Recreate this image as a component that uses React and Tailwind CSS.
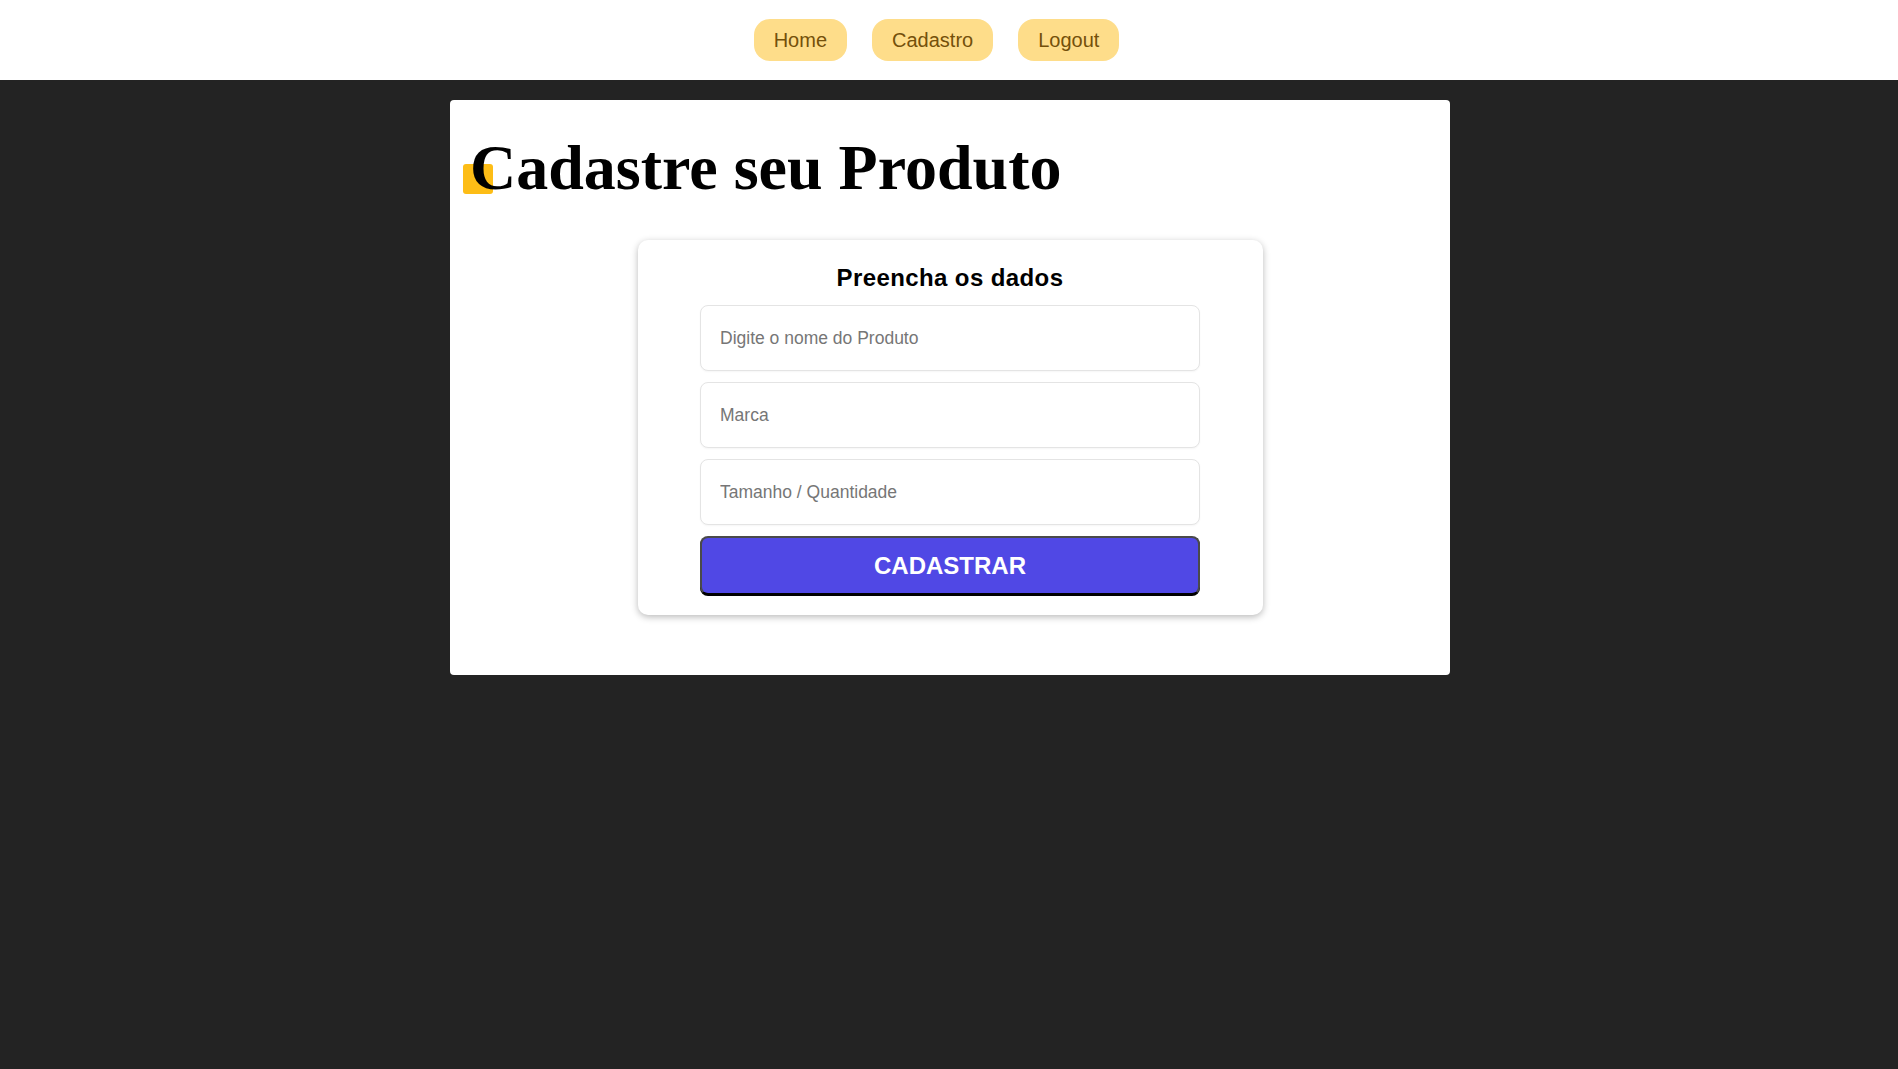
import React from "react";

function NavButton({ children }) {
  return (
    <a
      href="#"
      className="flex h-[42px] items-center rounded-[16px] bg-[#fedd8a] px-5 text-[20px] leading-none text-[#74500a] no-underline"
    >
      {children}
    </a>
  );
}

function Field({ placeholder }) {
  return (
    <input
      type="text"
      placeholder={placeholder}
      className="h-[66px] w-full rounded-[8px] border border-[#e4e4e4] bg-white px-[19px] text-[17.5px] text-[#333] shadow-[0_1px_2px_rgba(0,0,0,0.04)] outline-none placeholder:text-[#767676]"
      style={{ fontFamily: '"Liberation Sans", Arial, sans-serif' }}
    />
  );
}

export default function App() {
  return (
    <div
      className="min-h-[1069px] bg-[#232323]"
      style={{ fontFamily: '"Liberation Sans", Arial, sans-serif' }}
    >
      <nav className="flex h-[80px] items-center justify-center gap-[25px] bg-white pr-[25px]">
        <NavButton>Home</NavButton>
        <NavButton>Cadastro</NavButton>
        <NavButton>Logout</NavButton>
      </nav>

      <main className="flex justify-center pt-[20px] pl-[2px]">
        <section className="w-[1000px] rounded-[4px] bg-white px-[20px] pt-[32px] pb-[60px]">
          <h1
            className="relative m-0 text-[64px] font-bold leading-[72px] text-black"
            style={{ fontFamily: '"Liberation Serif", "Times New Roman", serif' }}
          >
            <span className="absolute left-[-7px] top-[32px] h-[30px] w-[30px] rounded-[3px] bg-[#fdbd16]" />
            <span className="relative">Cadastre seu Produto</span>
          </h1>

          <div className="mt-[36px] flex justify-center">
            <form
              className="flex w-[625px] flex-col items-center rounded-[10px] bg-white pt-[24px] pb-[20px] shadow-[0_2px_7px_rgba(0,0,0,0.28)]"
              onSubmit={(e) => e.preventDefault()}
            >
              <h2 className="m-0 text-[24px] font-bold leading-[27px] tracking-[0.4px] text-black">
                Preencha os dados
              </h2>
              <div className="mt-[14px] flex w-[500px] flex-col gap-[11px]">
                <Field placeholder="Digite o nome do Produto" />
                <Field placeholder="Marca" />
                <Field placeholder="Tamanho / Quantidade" />
                <button
                  type="submit"
                  className="h-[59px] w-full rounded-[8px] border-2 border-[#4a4a4a] border-b-black bg-[#5048e5] text-[24px] font-bold text-white shadow-[0_1px_0_#000]"
                >
                  CADASTRAR
                </button>
              </div>
            </form>
          </div>
        </section>
      </main>
    </div>
  );
}
